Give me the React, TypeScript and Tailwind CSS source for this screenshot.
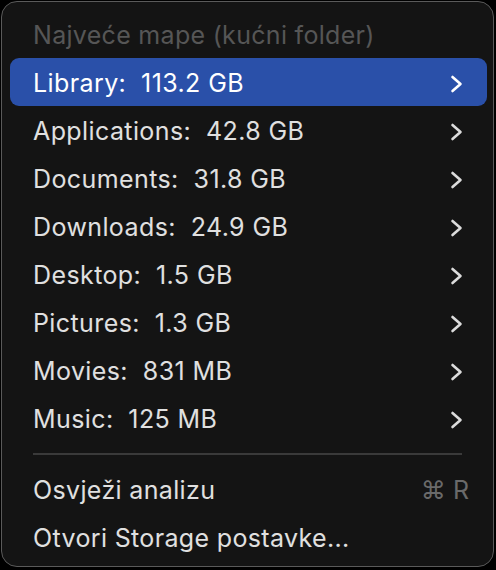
const folders = [
  { name: 'Library', size: '113.2 GB' },
  { name: 'Applications', size: '42.8 GB' },
  { name: 'Documents', size: '31.8 GB' },
  { name: 'Downloads', size: '24.9 GB' },
  { name: 'Desktop', size: '1.5 GB' },
  { name: 'Pictures', size: '1.3 GB' },
  { name: 'Movies', size: '831 MB' },
  { name: 'Music', size: '125 MB' },
];

function Chevron({ className }: { className?: string }) {
  return (
    <svg width="14" height="18" viewBox="0 0 14 18" className={className} fill="none">
      <polyline
        points="2.5,2 10.5,9 2.5,16"
        stroke="currentColor"
        strokeWidth="2.6"
        strokeLinecap="round"
        strokeLinejoin="round"
      />
    </svg>
  );
}

export default function App() {
  return (
    <div className="w-[496px] h-[570px] bg-black pt-px pl-px" style={{ fontFamily: 'Inter, "DejaVu Sans", sans-serif' }}>
      <div className="w-[493px] h-[566px] rounded-[16px] border border-[#5a5a5a] bg-[#141414] pt-[8px] flex flex-col">
        {/* section title */}
        <div className="h-[48px] flex items-center pl-[31px] pt-[3px] text-[25px] text-[#565656] tracking-[0.3px]">
          Najveće mape (kućni folder)
        </div>

        {folders.map((f, i) => {
          const active = i === 0;
          return (
            <div
              key={f.name}
              className={`h-[48px] ml-[8px] mr-[6px] pl-[23px] pr-[23px] pt-[3px] flex items-center justify-between rounded-[9px] text-[25px] ${
                active ? 'bg-[#2a50a9] text-white' : 'text-[#e0e0e0]'
              }`}
            >
              <span className="whitespace-pre tracking-[0.4px]">{`${f.name}:  ${f.size}`}</span>
              <Chevron className={active ? 'text-white' : 'text-[#dcdcdc]'} />
            </div>
          );
        })}

        <div className="h-[23px] flex items-center mx-[31px]">
          <div className="h-[2px] w-full bg-[#3a3a3a]" />
        </div>

        <div className="h-[48px] ml-[8px] mr-[6px] pl-[23px] pr-[18px] pt-[3px] flex items-center justify-between text-[25px] text-[#e0e0e0]">
          <span className="tracking-[0.35px]">Osvježi analizu</span>
          <span className="text-[#6a6a6a] whitespace-pre">⌘ R</span>
        </div>
        <div className="h-[48px] ml-[8px] mr-[6px] pl-[23px] pt-[3px] flex items-center text-[25px] text-[#e0e0e0]">
          <span className="tracking-[0.35px]">Otvori Storage postavke...</span>
        </div>
      </div>
    </div>
  );
}
